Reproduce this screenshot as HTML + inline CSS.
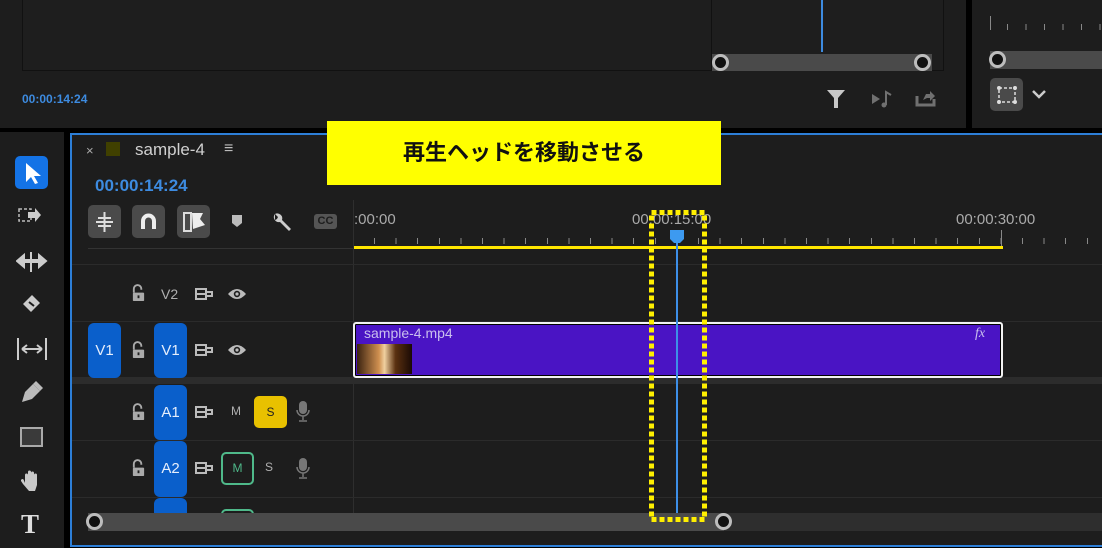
<!DOCTYPE html>
<html><head><meta charset="utf-8"><style>
*{margin:0;padding:0;box-sizing:border-box}
body{width:1102px;height:548px;background:#000;position:relative;overflow:hidden;font-family:"Liberation Sans","DejaVu Sans",sans-serif}
.a{position:absolute}
.btn{position:absolute;background:#4a4a4a;border-radius:5px}
.tb{position:absolute;background:#0a5fcb;border-radius:6px;color:#e6eefc;font-size:15px;text-align:center}
.gray{color:#b0b0b0;font-size:14px}
.hl{position:absolute;height:1px;background:#2b2b2b}
.knob{position:absolute;width:17px;height:17px;border-radius:50%;background:#111;border:3px solid #bdbdbd}
</style></head><body>
<svg width="0" height="0" style="position:absolute"><defs>
<symbol id="lock" viewBox="0 0 16 20"><path d="M3 9V5a4 4 0 0 1 8 0v1" stroke="#aaa" stroke-width="2" fill="none"/><rect x="2" y="9" width="12" height="9" rx="1" fill="#aaa"/><rect x="7" y="12" width="2" height="3" fill="#1d1d1d"/></symbol>
<symbol id="eye" viewBox="0 0 20 14"><path d="M1 7q9-10 18 0q-9 10-18 0z" fill="#bbb"/><circle cx="10" cy="7" r="3.2" fill="#1d1d1d"/><circle cx="10" cy="7" r="1.6" fill="#bbb"/></symbol>
<symbol id="cam" viewBox="0 0 18 14"><rect x="1" y="2" width="10" height="10" fill="none" stroke="#bbb" stroke-width="2"/><path d="M11 5h6v4h-6" fill="none" stroke="#bbb" stroke-width="2"/><path d="M1 7h10" stroke="#bbb" stroke-width="2"/></symbol>
<symbol id="mic" viewBox="0 0 14 22"><rect x="3" y="1" width="8" height="13" rx="4" fill="#777"/><path d="M1 10a6 6 0 0 0 12 0M7 16v4M3 21h8" stroke="#777" stroke-width="1.5" fill="none"/></symbol>
</defs></svg>
<!-- top area -->
<div class="a" style="left:0;top:0;width:966px;height:128px;background:#1d1d1d"></div>
<div class="a" style="left:22px;top:0;width:690px;height:71px;border:1px solid #111;border-top:none;background:#1e1e1e"></div>
<div class="a" style="left:711px;top:0;width:233px;height:71px;border:1px solid #111;border-top:none;background:#1e1e1e"></div>
<div class="a" style="left:821px;top:0;width:2px;height:52px;background:#3d8be0"></div>
<div class="a" style="left:712px;top:54px;width:220px;height:17px;background:#4a4a4a"></div>
<div class="knob" style="left:712px;top:54px"></div>
<div class="knob" style="left:914px;top:54px"></div>
<div class="a" style="left:22px;top:92px;color:#3d8be0;font-size:12px;font-weight:bold">00:00:14:24</div>
<svg class="a" style="left:826px;top:88px" width="20" height="22"><path d="M1 2h18l-7 8v10h-4v-10z" fill="#c8c8c8"/></svg>
<svg class="a" style="left:871px;top:89px" width="24" height="20"><path d="M1 5l8 5-8 5z" fill="#707070"/><path d="M15 16V3l5 3" stroke="#707070" stroke-width="2" fill="none"/><circle cx="13" cy="16" r="2.5" fill="#707070"/></svg>
<svg class="a" style="left:915px;top:88px" width="22" height="20"><path d="M2 8v9h17v-6" stroke="#707070" stroke-width="3" fill="none"/><path d="M8 12l3-6h4v-3l5 5-5 5v-3h-3z" fill="#707070"/></svg>
<div class="a" style="left:972px;top:0;width:130px;height:128px;background:#1d1d1d"></div>
<div class="a" style="left:990px;top:16px;width:1px;height:14px;background:#888"></div>
<div class="a" style="left:1007px;top:24px;width:95px;height:6px;background:repeating-linear-gradient(90deg,#888 0 1px,transparent 1px 18.5px)"></div>
<div class="a" style="left:990px;top:51px;width:112px;height:18px;background:#4a4a4a"></div>
<div class="knob" style="left:989px;top:51px"></div>
<div class="btn" style="left:990px;top:78px;width:33px;height:33px"></div>
<svg class="a" style="left:996px;top:84px" width="22" height="22"><rect x="3" y="4" width="16" height="14" fill="none" stroke="#ddd" stroke-width="1.5" stroke-dasharray="3 2"/><g fill="#ddd"><circle cx="3" cy="4" r="2"/><circle cx="19" cy="4" r="2"/><circle cx="3" cy="18" r="2"/><circle cx="19" cy="18" r="2"/></g></svg>
<svg class="a" style="left:1031px;top:88px" width="16" height="12"><path d="M2 3l6 6 6-6" stroke="#ccc" stroke-width="2.5" fill="none"/></svg>

<!-- toolbar -->
<div class="a" style="left:0;top:132px;width:64px;height:416px;background:#1d1d1d"></div>
<div class="a" style="left:15px;top:156px;width:33px;height:33px;background:#1473e6;border-radius:5px"></div>
<svg class="a" style="left:15px;top:156px" width="33" height="33"><path d="M11 7v19l5-5 4 7 3-1-4-7h7z" fill="#fff"/></svg>
<svg class="a" style="left:16px;top:204px" width="32" height="26"><rect x="3" y="5" width="12" height="12" fill="none" stroke="#bbb" stroke-width="1.5" stroke-dasharray="3 2"/><path d="M12 8h7v-4l6 7-6 7v-4h-7z" fill="#ccc"/></svg>
<svg class="a" style="left:16px;top:248px" width="32" height="28"><path d="M15 4v20M1 13l7-6v12zM30 13l-7-6v12z M8 12h15v2H8z" stroke="#ccc" stroke-width="2" fill="#ccc"/></svg>
<svg class="a" style="left:18px;top:290px" width="28" height="26"><path d="M5 14l9-9 8 8-9 9z" fill="#ccc"/><path d="M11 12l5 4" stroke="#1d1d1d" stroke-width="2"/></svg>
<svg class="a" style="left:16px;top:336px" width="32" height="26"><path d="M2 2v22M30 2v22" stroke="#ccc" stroke-width="2"/><path d="M6 13h20M6 13l5-4M6 13l5 4M26 13l-5-4M26 13l-5 4" stroke="#ccc" stroke-width="2" fill="none"/></svg>
<svg class="a" style="left:18px;top:380px" width="28" height="26"><path d="M4 22l3-10 8-8 7 7-8 8z" fill="#bbb"/><path d="M15 4l3-3 7 7-3 3z" fill="#bbb"/></svg>
<div class="a" style="left:20px;top:427px;width:23px;height:20px;border:2px solid #aaa;background:#3a3a3a"></div>
<svg class="a" style="left:19px;top:469px" width="26" height="26"><path d="M6 14V6a1.5 1.5 0 0 1 3 0v6V3a1.5 1.5 0 0 1 3 0v9V4a1.5 1.5 0 0 1 3 0v8V6a1.5 1.5 0 0 1 3 0v10l-2 6H10l-6-7-2-3a1.5 1.5 0 0 1 2.5-1.5z" fill="#c8c8c8"/></svg>
<div class="a" style="left:21px;top:509px;color:#ddd;font-size:27px;font-family:'Liberation Serif',serif;font-weight:bold">T</div>

<!-- timeline panel -->
<div class="a" style="left:70px;top:133px;width:1032px;height:414px;background:#1d1d1d;border-left:2px solid #2d7fd8;border-top:2px solid #2d7fd8;border-bottom:2px solid #2d7fd8"></div>
<div class="a" style="left:86px;top:143px;color:#aaa;font-size:13px">×</div>
<div class="a" style="left:106px;top:142px;width:14px;height:14px;background:#404000"></div>
<div class="a" style="left:135px;top:140px;color:#d0d0d0;font-size:17px">sample-4</div>
<div class="a" style="left:224px;top:140px;color:#bbb;font-size:16px">≡</div>
<div class="a" style="left:95px;top:176px;color:#3d8be0;font-size:17px;font-weight:bold">00:00:14:24</div>
<div class="btn" style="left:88px;top:205px;width:33px;height:33px"></div>
<svg class="a" style="left:88px;top:205px" width="33" height="33"><path d="M16.5 7v20M10 13h13M8 17h17M10 21h13" stroke="#ddd" stroke-width="2"/></svg>
<div class="btn" style="left:132px;top:205px;width:33px;height:33px"></div>
<svg class="a" style="left:132px;top:205px" width="33" height="33"><path d="M11 24v-8a5.5 5.5 0 0 1 11 0v8" stroke="#eee" stroke-width="4" fill="none"/></svg>
<div class="btn" style="left:177px;top:205px;width:33px;height:33px"></div>
<svg class="a" style="left:177px;top:205px" width="33" height="33"><path d="M7 8h7v18h-7z" fill="none" stroke="#ddd" stroke-width="2"/><path d="M15 8h11l-3 6 5 6-12 4z" fill="#eee"/></svg>
<svg class="a" style="left:230px;top:213px" width="14" height="16"><path d="M2 2h10v8l-5 4-5-4z" fill="#bbb"/></svg>
<svg class="a" style="left:270px;top:210px" width="24" height="24"><path d="M5 4a5 5 0 0 0 5 8l9 9 2-2-9-9a5 5 0 0 0-7-6l3 3-1 2-2 1z" fill="#ccc"/></svg>
<div class="a" style="left:314px;top:214px;width:23px;height:15px;background:#555;border-radius:3px;color:#1d1d1d;font-size:11px;font-weight:bold;text-align:center;line-height:15px">CC</div>
<div class="hl" style="left:88px;top:248px;width:265px;background:#333"></div>

<!-- ruler -->
<div class="a" style="left:354px;top:211px;color:#aaa;font-size:15px">:00:00</div>
<div class="a" style="left:632px;top:211px;color:#aaa;font-size:15px">00:00:15:00</div>
<div class="a" style="left:956px;top:211px;color:#aaa;font-size:15px">00:00:30:00</div>
<div class="a" style="left:353px;top:230px;width:1px;height:16px;background:#888"></div>
<div class="a" style="left:1001px;top:230px;width:1px;height:16px;background:#888"></div>
<div class="a" style="left:374px;top:238px;width:728px;height:6px;background:repeating-linear-gradient(90deg,#888 0 1px,transparent 1px 21.6px)"></div>
<div class="a" style="left:353px;top:246px;width:650px;height:3px;background:#ffe600"></div>
<div class="a" style="left:353px;top:200px;width:1px;height:313px;background:#2e2e2e"></div>

<!-- rows -->
<div class="hl" style="left:72px;top:264px;width:1030px"></div>
<div class="hl" style="left:72px;top:321px;width:1030px"></div>
<div class="a" style="left:72px;top:377px;width:1030px;height:7px;background:#2c2c2c"></div>
<div class="hl" style="left:72px;top:440px;width:1030px"></div>
<div class="hl" style="left:72px;top:497px;width:1030px"></div>

<!-- V2 -->
<svg class="a" style="left:131px;top:284px" width="15" height="19"><use href="#lock"/></svg>
<div class="a gray" style="left:161px;top:286px">V2</div>
<svg class="a" style="left:195px;top:287px" width="18" height="14"><use href="#cam"/></svg>
<svg class="a" style="left:227px;top:287px" width="20" height="14"><use href="#eye"/></svg>
<!-- V1 -->
<div class="tb" style="left:88px;top:323px;width:33px;height:55px;line-height:55px">V1</div>
<svg class="a" style="left:131px;top:341px" width="15" height="19"><use href="#lock"/></svg>
<div class="tb" style="left:154px;top:323px;width:33px;height:55px;line-height:55px">V1</div>
<svg class="a" style="left:195px;top:343px" width="18" height="14"><use href="#cam"/></svg>
<svg class="a" style="left:227px;top:343px" width="20" height="14"><use href="#eye"/></svg>
<!-- A1 -->
<svg class="a" style="left:131px;top:403px" width="15" height="19"><use href="#lock"/></svg>
<div class="tb" style="left:154px;top:385px;width:33px;height:55px;line-height:55px">A1</div>
<svg class="a" style="left:195px;top:405px" width="18" height="14"><use href="#cam"/></svg>
<div class="a gray" style="left:231px;top:404px;font-size:12px">M</div>
<div class="a" style="left:254px;top:396px;width:33px;height:32px;background:#e8c100;border-radius:5px;color:#222;font-size:12px;text-align:center;line-height:32px">S</div>
<svg class="a" style="left:296px;top:400px" width="14" height="22"><use href="#mic"/></svg>
<!-- A2 -->
<svg class="a" style="left:131px;top:459px" width="15" height="19"><use href="#lock"/></svg>
<div class="tb" style="left:154px;top:441px;width:33px;height:56px;line-height:56px">A2</div>
<svg class="a" style="left:195px;top:461px" width="18" height="14"><use href="#cam"/></svg>
<div class="a" style="left:221px;top:452px;width:33px;height:33px;border:2px solid #4fb98a;border-radius:5px;color:#4fb98a;font-size:12px;text-align:center;line-height:29px">M</div>
<div class="a gray" style="left:265px;top:460px;font-size:12px">S</div>
<svg class="a" style="left:296px;top:457px" width="14" height="22"><use href="#mic"/></svg>
<!-- A3 partial -->
<div class="tb" style="left:154px;top:498px;width:33px;height:30px"></div>
<div class="a" style="left:221px;top:509px;width:33px;height:20px;border:2px solid #4fb98a;border-radius:5px"></div>

<!-- clip -->
<div class="a" style="left:353px;top:322px;width:650px;height:56px;border:2px solid #f2f2f2;border-radius:3px;background:#000"></div>
<div class="a" style="left:356px;top:325px;width:644px;height:50px;background:#4a14c4"></div>
<div class="a" style="left:364px;top:325px;color:#c9bfee;font-size:14px">sample-4.mp4</div>
<div class="a" style="left:975px;top:326px;color:#c9bfee;font-size:14px;font-style:italic;font-family:'Liberation Serif',serif">fx</div>
<div class="a" style="left:357px;top:344px;width:55px;height:30px;background:linear-gradient(90deg,#3a2210,#d09050 40%,#f0d0a0 50%,#5a3010 70%,#1a0a05)"></div>

<!-- scrollbar -->
<div class="a" style="left:88px;top:513px;width:1014px;height:18px;background:#2e2e2e"></div>
<div class="a" style="left:88px;top:513px;width:636px;height:18px;background:#4a4a4a"></div>
<div class="knob" style="left:86px;top:513px"></div>
<div class="knob" style="left:715px;top:513px"></div>

<!-- playhead -->
<div class="a" style="left:676px;top:240px;width:2px;height:273px;background:#3d8fe8"></div>
<svg class="a" style="left:669px;top:229px" width="16" height="15"><path d="M1 1h14v9l-4 4h-6l-4-4z" fill="#3d9af0"/></svg>

<!-- annotation -->
<svg class="a" style="left:647px;top:208px" width="62" height="316"><rect x="4.5" y="4.5" width="53" height="307" fill="none" stroke="#ffef00" stroke-width="5" stroke-dasharray="5 3"/></svg>
<div class="a" style="left:327px;top:121px;width:394px;height:64px;background:#ffff00;color:#111;font-size:22px;font-weight:bold;text-align:center;line-height:64px;font-family:'Liberation Sans','Noto Sans CJK JP',sans-serif">再生ヘッドを移動させる</div>
</body></html>
